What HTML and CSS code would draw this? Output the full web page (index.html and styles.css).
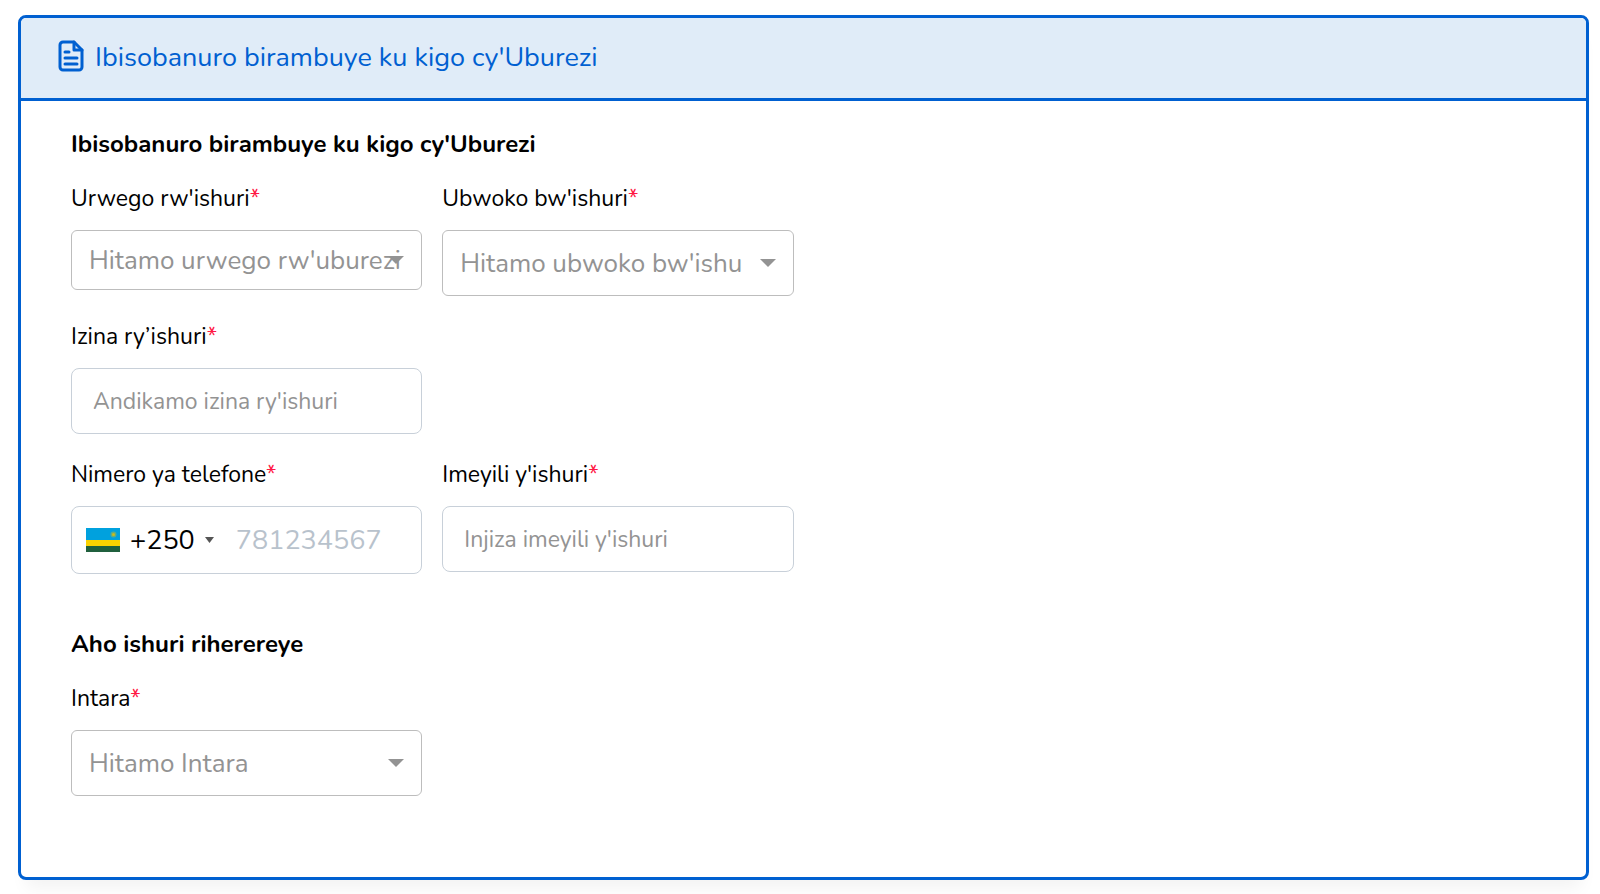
FILE: index.html
```
<!DOCTYPE html>
<html lang="rw">
<head>
  <meta charset="UTF-8" />
  <meta name="viewport" content="width=device-width, initial-scale=1" />
  <title>Ibisobanuro birambuye ku kigo cy'Uburezi</title>
  <link rel="stylesheet" href="styles.css">
</head>
<body>

  <form class="card">
    <header class="card-header">
      <svg class="doc-icon" viewBox="0 0 26 32" aria-hidden="true">
        <path d="M16 2H5a3 3 0 0 0-3 3v22a3 3 0 0 0 3 3h16a3 3 0 0 0 3-3V10z" />
        <path d="M16 2v8h8M7 12h4M7 18h12M7 24h12" />
      </svg>
      <h1>Ibisobanuro birambuye ku kigo cy'Uburezi</h1>
    </header>

    <div class="card-body">
      <section>
        <h2>Ibisobanuro birambuye ku kigo cy'Uburezi</h2>
        <div class="grid">
          <div class="field">
            <label for="urwego">Urwego rw'ishuri<span class="required">*</span></label>
            <div class="select-box">
              <select id="urwego" class="compact">
                <option>Hitamo urwego rw'uburezi</option>
              </select>
              <svg class="arrow" viewBox="0 0 16 8" aria-hidden="true"><path d="M0 0h16L8 8z" /></svg>
            </div>
          </div>

          <div class="field">
            <label for="ubwoko">Ubwoko bw'ishuri<span class="required">*</span></label>
            <div class="select-box">
              <select id="ubwoko">
                <option>Hitamo ubwoko bw'ishu</option>
              </select>
              <svg class="arrow" viewBox="0 0 16 8" aria-hidden="true"><path d="M0 0h16L8 8z" /></svg>
            </div>
          </div>

          <div class="field new-row">
            <label for="izina">Izina ry’ishuri<span class="required">*</span></label>
            <input id="izina" class="text-input" type="text" placeholder="Andikamo izina ry'ishuri" />
          </div>

          <div class="field new-row">
            <label for="telefone">Nimero ya telefone<span class="required">*</span></label>
            <div class="phone">
              <button type="button" class="country">
                <svg class="flag" viewBox="0 0 34 24" aria-hidden="true">
                  <path fill="#00a1de" d="M0 0h34v12H0z" />
                  <path fill="#fad201" d="M0 12h34v6H0z" />
                  <path fill="#20603d" d="M0 18h34v6H0z" />
                  <circle fill="#e5be01" opacity=".4" cx="27.500" cy="6.500" r="3" />
                  <circle fill="#e5be01" opacity=".8" cx="27.500" cy="6.500" r="1.500" />
                </svg>
                <span>+250</span>
                <svg class="caret" viewBox="0 0 9 6" aria-hidden="true"><path d="M0 0h9L4.500 6z" /></svg>
              </button>
              <input id="telefone" type="tel" placeholder="781234567" />
            </div>
          </div>

          <div class="field">
            <label for="imeyili">Imeyili y'ishuri<span class="required">*</span></label>
            <input id="imeyili" class="text-input" type="email" placeholder="Injiza imeyili y'ishuri" />
          </div>
        </div>
      </section>

      <section>
        <h2>Aho ishuri riherereye</h2>
        <div class="grid">
          <div class="field">
            <label for="intara">Intara<span class="required">*</span></label>
            <div class="select-box">
              <select id="intara">
                <option>Hitamo Intara</option>
              </select>
              <svg class="arrow" viewBox="0 0 16 8" aria-hidden="true"><path d="M0 0h16L8 8z" /></svg>
            </div>
          </div>
        </div>
      </section>
    </div>
  </form>

</body>
</html>
```
FILE: styles.css
```
:root {
  --primary: #0060d1;
  --header-bg: #e0ecf8;
  --text: #000;
  --muted: #939393;
  --select-border: #bdbdbd;
  --input-border: #c8d0d9;
  --required: #ff1744;
}

* {
  box-sizing: border-box;
}

body {
  margin: 0;
  padding: 15px 11px 14px 18px;
  background-color: #fff;
  color: var(--text);
  font-family: Nunito, Lato, sans-serif;
}

.card {
  border: 3px solid var(--primary);
  border-radius: 8px;
  background-color: #fff;
  box-shadow: 0 16px 16px -8px rgba(0, 0, 0, 0.05);
}

.card-header {
  display: flex;
  align-items: center;
  gap: 11px;
  padding: 20px 37px;
  border-bottom: 3px solid var(--primary);
  border-radius: 5px 5px 0 0;
  background-color: var(--header-bg);
  color: var(--primary);
}

.doc-icon {
  width: 26px;
  height: 32px;
  margin-bottom: 4px;
  fill: none;
  stroke: currentColor;
  stroke-width: 3;
  stroke-linecap: round;
  stroke-linejoin: round;
}

h1 {
  margin: 0;
  font-size: 27px;
  font-weight: 400;
  line-height: 40px;
}

.card-body {
  padding: 28px 50px 81px;
}

section + section {
  margin-top: 55px;
}

h2 {
  margin: 0 0 25px;
  font-size: 24px;
  font-weight: 700;
  line-height: 30px;
}

.grid {
  display: grid;
  grid-template-columns: repeat(4, minmax(0, 1fr));
  gap: 26px 20px;
}

.field {
  display: flex;
  flex-direction: column;
  gap: 16px;
}

.new-row {
  grid-column-start: 1;
}

label {
  font-size: 23px;
  line-height: 30px;
}

.required {
  color: var(--required);
}

.select-box {
  position: relative;
}

select {
  display: block;
  width: 100%;
  height: 66px;
  padding: 0 12px 0 17px;
  border: 1px solid var(--select-border);
  border-radius: 6px;
  background-color: transparent;
  color: var(--muted);
  font-family: inherit;
  font-size: 26px;
  appearance: none;
}

.compact {
  height: 60px;
}

.arrow {
  position: absolute;
  top: 50%;
  right: 18px;
  width: 16px;
  height: 8px;
  margin-top: -4px;
  fill: var(--muted);
  pointer-events: none;
}

.text-input,
.phone {
  width: 100%;
  height: 66px;
  border: 1px solid var(--input-border);
  border-radius: 8px;
  background-color: #fff;
}

.text-input {
  padding: 0 21px;
  font-family: inherit;
  font-size: 23px;
}

.text-input::placeholder {
  color: var(--muted);
}

.phone {
  display: flex;
  align-items: center;
  height: 68px;
}

.country {
  display: flex;
  align-items: center;
  gap: 10px;
  padding: 0 14px;
  border: none;
  background: none;
  color: var(--text);
  font-family: inherit;
  font-size: 27px;
}

.flag {
  width: 34px;
  height: 24px;
}

.caret {
  width: 9px;
  height: 6px;
  fill: #555;
}

.phone input {
  flex: 1;
  min-width: 0;
  padding: 0 8px;
  border: none;
  background: none;
  font-family: inherit;
  font-size: 27px;
}

.phone input::placeholder {
  color: #b8c2cc;
}
```
